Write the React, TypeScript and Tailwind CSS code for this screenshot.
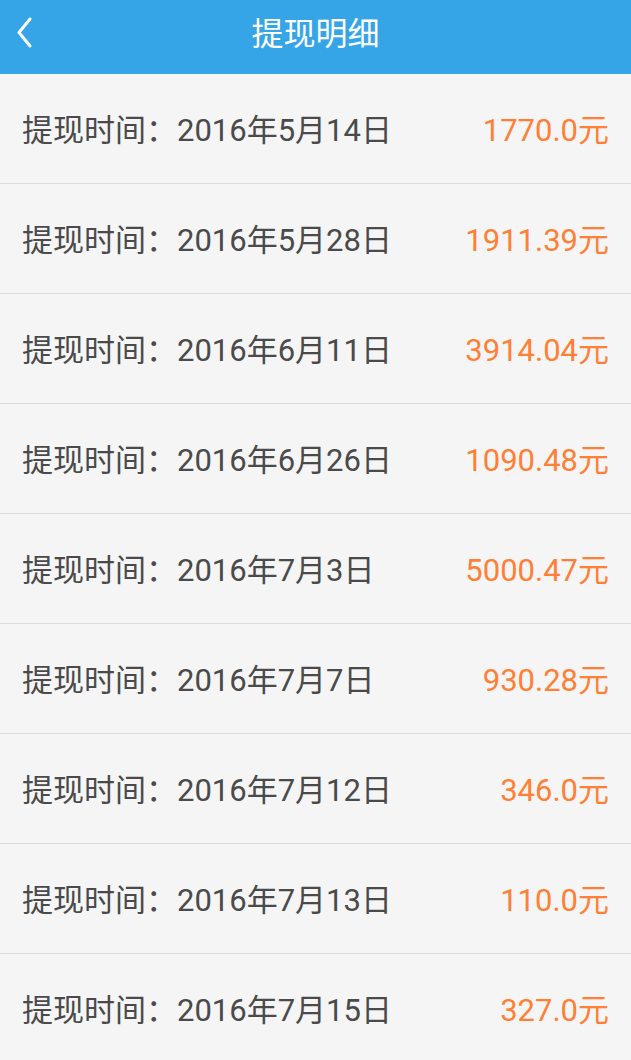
import React from "react";

const records = [
  { date: "2016年5月14日", amount: "1770.0元" },
  { date: "2016年5月28日", amount: "1911.39元" },
  { date: "2016年6月11日", amount: "3914.04元" },
  { date: "2016年6月26日", amount: "1090.48元" },
  { date: "2016年7月3日", amount: "5000.47元" },
  { date: "2016年7月7日", amount: "930.28元" },
  { date: "2016年7月12日", amount: "346.0元" },
  { date: "2016年7月13日", amount: "110.0元" },
  { date: "2016年7月15日", amount: "327.0元" },
];

const font = "font-['Roboto','Noto_Sans_CJK_SC',sans-serif]";

export default function App() {
  return (
    <div className={`w-[631px] h-[1060px] overflow-hidden bg-[#f5f5f5] ${font}`}>
      {/* header */}
      <div className="relative h-[74px] bg-[#35a5e8] flex items-center justify-center">
        <button className="absolute left-[10px] top-[14px] w-[28px] h-[36px] flex items-center justify-center">
          <svg width="20" height="32" viewBox="0 0 20 32" fill="none">
            <path d="M16 3 L5 16.5 L16 30" stroke="white" strokeWidth="3" strokeLinecap="round" strokeLinejoin="round" />
          </svg>
        </button>
        <h1 className="text-white text-[32px] leading-none -mt-[6px]">提现明细</h1>
      </div>

      {/* list */}
      <div>
        {records.map((r) => (
          <div
            key={r.date}
            className="h-[110px] border-b border-[#dcdcdc] flex items-center justify-between pl-[22px] pr-[22px] pt-[3px]"
          >
            <span className="text-[31px] text-[#4a4a4a] leading-none">提现时间：{r.date}</span>
            <span className="text-[31px] text-[#ff7f36] leading-none">{r.amount}</span>
          </div>
        ))}
      </div>
    </div>
  );
}
